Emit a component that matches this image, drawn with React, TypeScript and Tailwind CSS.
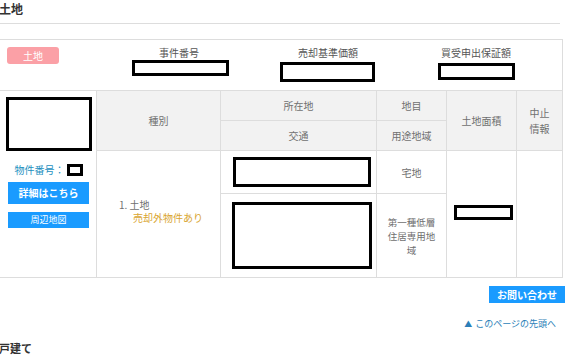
const font = { fontFamily: '"Noto Sans CJK JP", "Noto Sans", sans-serif' };

const Redact = ({ className }: { className: string }) => (
  <div className={`border-[3px] border-black bg-white ${className}`} />
);

const App = () => {
  return (
    <div
      className="relative w-[568px] h-[356px] overflow-hidden bg-white text-[10px] text-[#707070]"
      style={font}
    >
      <div className="-ml-[3px] w-[566px]">
        <h2 className="h-[23px] pt-[1px] text-[12px] font-bold leading-[16px] text-[#333] pl-[2px]">
          土地
        </h2>
        <hr className="border-[#ddd] w-[563px]" />

        {/* summary box */}
        <div className="mt-[15px] h-[51px] border border-[#ddd] border-b-0 flex">
          <div className="w-[106px] pl-[9px] pt-[7px]">
            <div className="h-[17px] w-[52px] rounded-[3px] bg-[#fba0a6] text-white text-[10px] leading-[17px] text-center">
              土地
            </div>
          </div>
          <div className="w-[150px] flex flex-col items-center pt-[7px]">
            <div className="leading-[12px] text-[#555]">事件番号</div>
            <Redact className="w-[97px] h-[16px] mt-px ml-[3px]" />
          </div>
          <div className="w-[148px] flex flex-col items-center pt-[7px]">
            <div className="leading-[12px] text-[#555]">売却基準価額</div>
            <Redact className="w-[95px] h-[20px] mt-[3px] -ml-[2px]" />
          </div>
          <div className="w-[148px] flex flex-col items-center pt-[7px]">
            <div className="leading-[12px] text-[#555]">買受申出保証額</div>
            <Redact className="w-[77px] h-[17px] mt-[4px]" />
          </div>
        </div>

        {/* table */}
        <div className="grid grid-cols-[99px_124px_156px_70px_70px_47px] grid-rows-[30px_29px_43px_84px] border-t border-b border-[#ddd] text-center">
          <div className="row-span-4 border-l border-[#ddd] bg-white flex flex-col items-center pt-[6px]">
            <Redact className="w-[86px] h-[54px] ml-[3px] border-4" />
            <div className="mt-[11px] flex items-center text-[#1c8fc0] ml-[3px]">
              物件番号：
              <Redact className="w-[16px] h-[12px] ml-[2px]" />
            </div>
            <div className="mt-[5px] ml-[3px] w-[81px] h-[22px] bg-[#1a9bff] text-white text-[10px] leading-[22px] font-bold">
              詳細はこちら
            </div>
            <div className="mt-[8px] ml-[3px] w-[81px] h-[16px] bg-[#1a9bff] text-white text-[9px] leading-[16px]">
              周辺地図
            </div>
          </div>
          <div className="row-span-2 bg-[#f2f2f2] border-l border-[#ddd] flex items-center justify-center">
            種別
          </div>
          <div className="bg-[#f2f2f2] border-l border-b border-[#ddd] flex items-center justify-center">
            所在地
          </div>
          <div className="bg-[#f2f2f2] border-l border-b border-[#ddd] flex items-center justify-center">
            地目
          </div>
          <div className="row-span-2 bg-[#f2f2f2] border-l border-[#ddd] flex items-center justify-center">
            土地面積
          </div>
          <div className="row-span-2 bg-[#f2f2f2] border-l border-r border-[#ddd] flex items-center justify-center leading-[16px]">
            中止
            <br />
            情報
          </div>
          <div className="bg-[#f2f2f2] border-l border-[#ddd] flex items-center justify-center">
            交通
          </div>
          <div className="bg-[#f2f2f2] border-l border-[#ddd] flex items-center justify-center">
            用途地域
          </div>

          <div className="row-span-2 border-l border-t border-[#ddd] text-left pl-[22px] pt-[47px] leading-[13px]">
            <div>1. 土地</div>
            <div className="pl-[14px] text-[#d9a531]">売却外物件あり</div>
          </div>
          <div className="border-l border-t border-[#ddd] flex items-center justify-center">
            <Redact className="w-[138px] h-[30px] ml-[6px] border-4" />
          </div>
          <div className="border-l border-t border-[#ddd] flex items-center justify-center">
            宅地
          </div>
          <div className="row-span-2 border-l border-t border-[#ddd] flex justify-center pt-[54px]">
            <Redact className="w-[59px] h-[15px] ml-[4px]" />
          </div>
          <div className="row-span-2 border-l border-t border-r border-[#ddd]" />
          <div className="border-l border-t border-[#ddd] flex items-center justify-center">
            <Redact className="w-[140px] h-[67px] ml-[6px] border-4" />
          </div>
          <div className="border-l border-t border-[#ddd] flex items-center justify-center leading-[14px] px-[8px] text-[9.5px]">
            第一種低層住居専用地域
          </div>
        </div>

        <div className="flex justify-end mt-[8px] w-[568px]">
          <div className="w-[76px] h-[17px] bg-[#1a9bff] text-white text-[10px] font-bold leading-[17px] text-center">
            お問い合わせ
          </div>
        </div>
        <div className="flex justify-end mt-[15px] pr-[9px] w-[568px] text-[9px] text-[#2c7fb8] leading-[12px]">
          <span className="mr-[3px] text-[8px]">▲</span>このページの先頭へ
        </div>
        <h2 className="mt-[11px] text-[11px] text-[#333] font-semibold leading-[14px] pl-[2px]">
          戸建て
        </h2>
      </div>
    </div>
  );
};

export default App;
